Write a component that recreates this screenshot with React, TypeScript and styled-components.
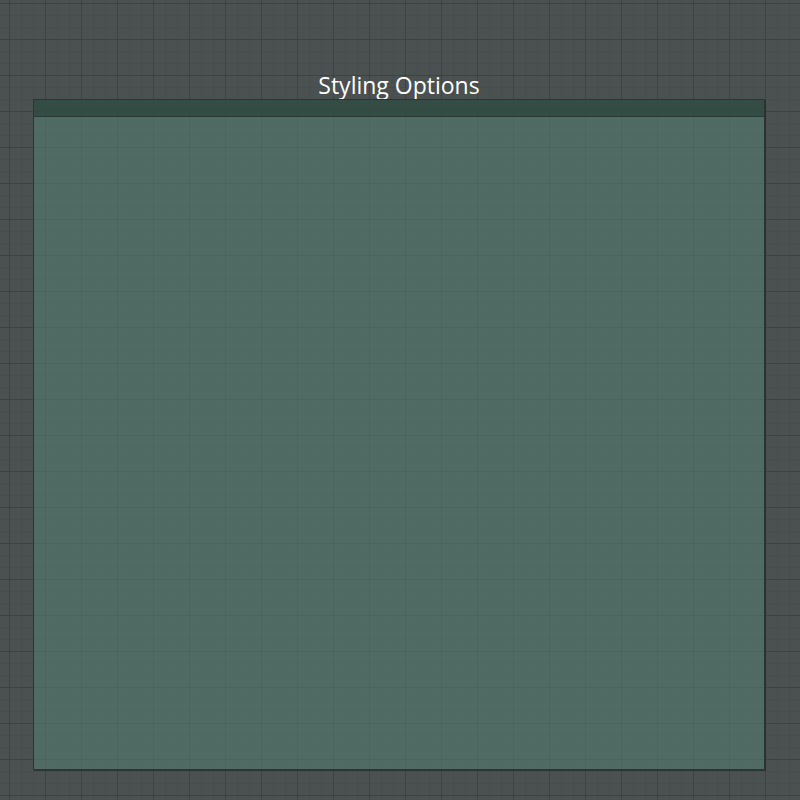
import React from "react";
import styled, { createGlobalStyle } from "styled-components";

const Global = createGlobalStyle`
  html, body {
    margin: 0;
    padding: 0;
    width: 800px;
    height: 800px;
    overflow: hidden;
    background: #4a4f4f;
  }
  #root {
    width: 800px;
    height: 800px;
  }
`;

const Canvas = styled.div`
  box-sizing: border-box;
  width: 800px;
  height: 800px;
  display: flex;
  flex-direction: column;
  align-items: center;
  padding: 71px 35px 0 33px;
  font-family: "Open Sans", "DejaVu Sans", sans-serif;
  background-color: #4b5050;
  background-image:
    linear-gradient(to right, rgba(40, 44, 44, 0.3) 1px, transparent 1px),
    linear-gradient(to bottom, rgba(40, 44, 44, 0.3) 1px, transparent 1px),
    linear-gradient(to right, rgba(40, 44, 44, 0.09) 1px, transparent 1px),
    linear-gradient(to bottom, rgba(40, 44, 44, 0.09) 1px, transparent 1px);
  background-size: 36px 36px, 36px 36px, 12px 12px, 12px 12px;
  background-position: 9px 3px, 9px 3px, 9px 3px, 9px 3px;
`;

const Title = styled.h1`
  margin: 0;
  height: 28px;
  line-height: 28px;
  font-size: 23px;
  font-weight: 400;
  color: #ffffff;
  white-space: nowrap;
`;

const Panel = styled.section`
  box-sizing: border-box;
  width: 732px;
  height: 671px;
  display: flex;
  flex-direction: column;
  border: 1px solid #2c3533;
  box-shadow: 1px 1px 0 rgba(30, 35, 34, 0.6);
  background: rgba(86, 130, 116, 0.55);
`;

const PanelHeader = styled.div`
  height: 16px;
  flex: none;
  background: rgba(42, 66, 57, 0.75);
  border-bottom: 1px solid #2c3a36;
`;

const PanelBody = styled.div`
  flex: 1;
`;

export default function App() {
  return (
    <>
      <Global />
      <Canvas>
        <Title>Styling Options</Title>
        <Panel>
          <PanelHeader />
          <PanelBody />
        </Panel>
      </Canvas>
    </>
  );
}
